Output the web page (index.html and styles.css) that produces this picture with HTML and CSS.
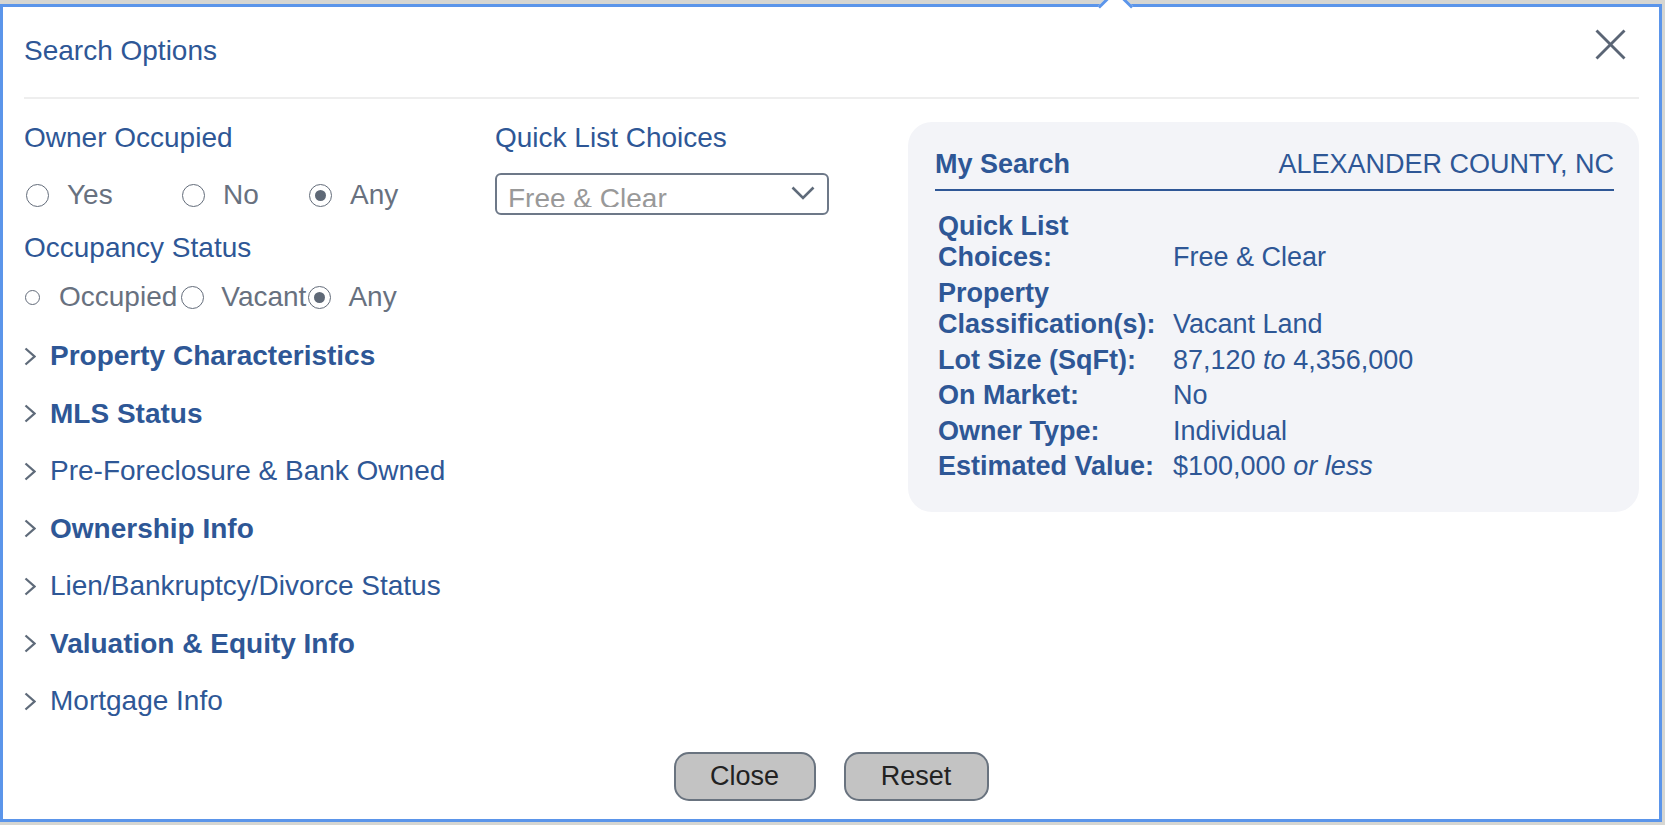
FILE: index.html
```html
<!DOCTYPE html>
<html lang="en">
<head>
<meta charset="utf-8">
<title>Search Options</title>
<link rel="stylesheet" href="styles.css">
</head>
<body>
<div class="dialog">
  <span class="arrow"></span>
  <div class="header">
    <div class="title">Search Options</div>
    <svg class="close-x" width="31" height="31" viewBox="0 0 31 31"><line x1="1.5" y1="1.5" x2="29.5" y2="29.5"/><line x1="29.5" y1="1.5" x2="1.5" y2="29.5"/></svg>
  </div>
  <div class="sep"></div>
  <div class="body">
    <div class="col-left">
      <div class="label">Owner Occupied</div>
      <div class="radio-row row1">
        <div class="opt w1"><span class="radio"></span><span class="opt-text">Yes</span></div>
        <div class="opt w2"><span class="radio"></span><span class="opt-text">No</span></div>
        <div class="opt"><span class="radio on"></span><span class="opt-text">Any</span></div>
      </div>
      <div class="label label2">Occupancy Status</div>
      <div class="radio-row row2">
        <span class="radio small"></span><span class="opt-text">Occupied</span><span class="radio r2"></span><span class="opt-text">Vacant</span><span class="radio on r3"></span><span class="opt-text">Any</span>
      </div>
      <ul class="acc">
        <li class="acc-item bold"><svg class="chev" width="12" height="19" viewBox="0 0 12 19"><polyline points="1.5,1.5 10.5,9.5 1.5,17.5"/></svg><span>Property Characteristics</span></li>
        <li class="acc-item bold"><svg class="chev" width="12" height="19" viewBox="0 0 12 19"><polyline points="1.5,1.5 10.5,9.5 1.5,17.5"/></svg><span>MLS Status</span></li>
        <li class="acc-item"><svg class="chev" width="12" height="19" viewBox="0 0 12 19"><polyline points="1.5,1.5 10.5,9.5 1.5,17.5"/></svg><span>Pre-Foreclosure &amp; Bank Owned</span></li>
        <li class="acc-item bold"><svg class="chev" width="12" height="19" viewBox="0 0 12 19"><polyline points="1.5,1.5 10.5,9.5 1.5,17.5"/></svg><span>Ownership Info</span></li>
        <li class="acc-item"><svg class="chev" width="12" height="19" viewBox="0 0 12 19"><polyline points="1.5,1.5 10.5,9.5 1.5,17.5"/></svg><span>Lien/Bankruptcy/Divorce Status</span></li>
        <li class="acc-item bold"><svg class="chev" width="12" height="19" viewBox="0 0 12 19"><polyline points="1.5,1.5 10.5,9.5 1.5,17.5"/></svg><span>Valuation &amp; Equity Info</span></li>
        <li class="acc-item"><svg class="chev" width="12" height="19" viewBox="0 0 12 19"><polyline points="1.5,1.5 10.5,9.5 1.5,17.5"/></svg><span>Mortgage Info</span></li>
      </ul>
    </div>
    <div class="col-mid">
      <div class="label">Quick List Choices</div>
      <div class="select">
        <div class="select-text">Free &amp; Clear</div>
        <svg class="select-chev" width="24" height="14" viewBox="0 0 24 14"><polyline points="1.5,1.5 12,12 22.5,1.5"/></svg>
      </div>
    </div>
    <div class="panel">
      <div class="panel-head">
        <span class="panel-title">My Search</span>
        <span class="panel-county">ALEXANDER COUNTY, NC</span>
      </div>
      <div class="summary">
        <div class="k">Quick List Choices:</div><div class="v">Free &amp; Clear</div>
        <div class="k">Property Classification(s):</div><div class="v">Vacant Land</div>
        <div class="k">Lot Size (SqFt):</div><div class="v">87,120 <i>to</i> 4,356,000</div>
        <div class="k">On Market:</div><div class="v">No</div>
        <div class="k">Owner Type:</div><div class="v">Individual</div>
        <div class="k">Estimated Value:</div><div class="v">$100,000 <i>or less</i></div>
      </div>
    </div>
  </div>
  <div class="footer">
    <button class="btn btn-close">Close</button>
    <button class="btn btn-reset">Reset</button>
  </div>
</div>
</body>
</html>
```
FILE: styles.css
```css
html, body {
  margin: 0;
  padding: 0;
}
body {
  width: 1665px;
  height: 825px;
  overflow: hidden;
  background: #d6d6d2;
  font-family: "Liberation Sans", Arial, Helvetica, sans-serif;
}
.dialog {
  position: relative;
  margin-top: 4px;
  width: 1662px;
  height: 818px;
  box-sizing: border-box;
  border: 3px solid #5b95ea;
  background: #ffffff;
  display: flex;
  flex-direction: column;
}
.arrow {
  position: absolute;
  top: -13px;
  left: 1100px;
  width: 22px;
  height: 22px;
  background: #ffffff;
  border-top: 3px solid #5b95ea;
  border-left: 3px solid #5b95ea;
  transform: rotate(45deg);
}
.header {
  height: 90px;
  display: flex;
  justify-content: space-between;
  align-items: flex-start;
  padding: 0 33px 0 21px;
  flex: none;
}
.title {
  padding-top: 30px;
  font-size: 28px;
  line-height: 28px;
  color: #2e5796;
}
.close-x {
  margin-top: 22px;
  stroke: #5a6575;
  stroke-width: 2.8;
  fill: none;
}
.sep {
  height: 2px;
  background: #eeeeee;
  margin: 0 20px 0 21px;
  flex: none;
}
.body {
  flex: 1;
  display: grid;
  grid-template-columns: 471px 413px 731px;
  align-items: start;
  padding: 23px 20px 0 21px;
}
.label {
  font-size: 28px;
  line-height: 32px;
  color: #2e5796;
}
.radio-row {
  display: flex;
  align-items: center;
  height: 32px;
  font-size: 28px;
  color: #68717f;
}
.row1 {
  margin-top: 25px;
  padding-left: 2px;
}
.label2 {
  margin-top: 21px;
}
.row2 {
  margin-top: 17px;
  padding-left: 1px;
}
.opt {
  display: flex;
  align-items: center;
}
.w1 { width: 156px; }
.w2 { width: 127px; }
.radio {
  flex: none;
  width: 23px;
  height: 23px;
  box-sizing: border-box;
  border: 1.6px solid #636c7a;
  border-radius: 50%;
  display: flex;
  align-items: center;
  justify-content: center;
  margin-right: 18px;
  background: #fff;
}
.radio.on::after {
  content: "";
  width: 11px;
  height: 11px;
  border-radius: 50%;
  background: #5f6977;
}
.radio.small {
  width: 15px;
  height: 15px;
  border-width: 1.3px;
  margin-right: 19px;
}
.radio.r2 {
  margin-left: 4px;
  margin-right: 17px;
}
.radio.r3 {
  margin-left: 2px;
  margin-right: 17px;
}
.acc {
  list-style: none;
  margin: 27px 0 0 0;
  padding: 0;
}
.acc-item {
  display: flex;
  align-items: center;
  height: 32px;
  margin-bottom: 25.5px;
  font-size: 28px;
  color: #2e5796;
}
.acc-item.bold {
  font-weight: bold;
}
.chev {
  flex: none;
  margin-right: 14px;
  fill: none;
  stroke: #5f6b7a;
  stroke-width: 2.3;
}
.select {
  margin-top: 19px;
  width: 334px;
  height: 42px;
  box-sizing: border-box;
  border: 2px solid #6d7888;
  border-radius: 6px;
  display: flex;
  align-items: flex-start;
  justify-content: space-between;
  padding: 0 12px 0 11px;
}
.select-text {
  height: 32px;
  box-sizing: border-box;
  padding-top: 10px;
  overflow: hidden;
  font-size: 28px;
  line-height: 28px;
  color: #999999;
}
.select-chev {
  margin-top: 11px;
  fill: none;
  stroke: #5f6b7a;
  stroke-width: 2.6;
}
.panel {
  background: #f3f4f8;
  border-radius: 24px;
  padding: 26px 25px 27px 27px;
  color: #2e5796;
}
.panel-head {
  display: flex;
  justify-content: space-between;
  align-items: center;
  height: 32px;
  padding-bottom: 9px;
  border-bottom: 2px solid #2e5796;
  font-size: 27px;
}
.panel-title {
  font-weight: bold;
}
.summary {
  margin: 17.5px 0 0 3px;
  display: grid;
  grid-template-columns: 235px 1fr;
  font-size: 27px;
  line-height: 31.5px;
}
.summary .k,
.summary .v {
  padding: 2px 0;
}
.summary .k {
  font-weight: bold;
  padding-right: 12px;
}
.summary .v {
  align-self: end;
}
.footer {
  flex: none;
  display: flex;
  justify-content: center;
  gap: 28px;
  padding-bottom: 18px;
}
.btn {
  height: 49px;
  box-sizing: border-box;
  border: 2px solid #69737f;
  border-radius: 15px;
  background: #c3c3c3;
  font-family: "Liberation Sans", Arial, Helvetica, sans-serif;
  font-size: 27px;
  color: #222222;
  padding: 0;
}
.btn-close { width: 142px; }
.btn-reset { width: 145px; }
```
